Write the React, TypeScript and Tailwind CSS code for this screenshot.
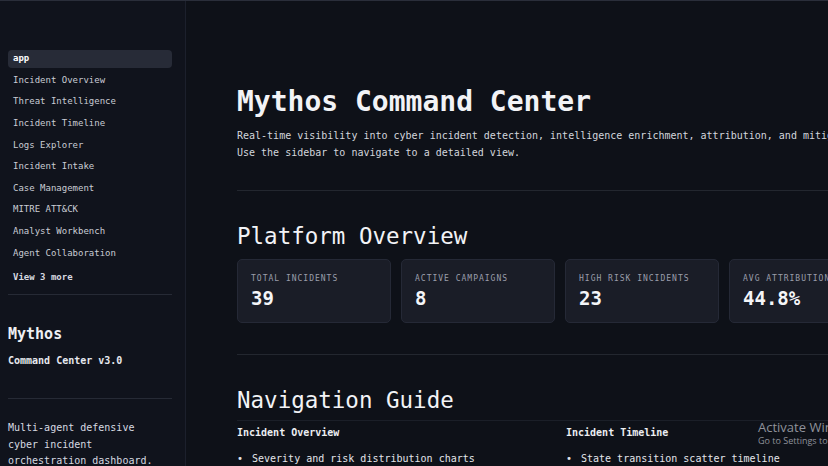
import React from "react";

const mono = { fontFamily: '"DejaVu Sans Mono", "Liberation Mono", monospace' };

const navItems = [
  "Incident Overview",
  "Threat Intelligence",
  "Incident Timeline",
  "Logs Explorer",
  "Incident Intake",
  "Case Management",
  "MITRE ATT&CK",
  "Analyst Workbench",
  "Agent Collaboration",
];

const stats = [
  { label: "TOTAL INCIDENTS", value: "39" },
  { label: "ACTIVE CAMPAIGNS", value: "8" },
  { label: "HIGH RISK INCIDENTS", value: "23" },
  { label: "AVG ATTRIBUTION", value: "44.8%" },
];

export default function App() {
  return (
    <div
      className="relative flex h-[466px] w-[828px] overflow-hidden border-t border-[#2a2e3a] bg-[#0e1118] text-[#e6e8ee]"
      style={mono}
    >
      {/* Sidebar */}
      <aside className="flex w-[186px] shrink-0 flex-col border-r border-[#1c202c] bg-[#10131c] pl-2 pr-[13px] pt-[49px]">
        <div className="flex flex-col">
          <div className="flex h-[18px] items-center rounded-[4px] bg-[#272b37] px-[5px] text-[9px] font-bold text-white">
            app
          </div>
          {navItems.map((n) => (
            <div key={n} className="mt-[3.6px] flex h-[18px] items-center px-[5px] text-[9px] text-[#c9ccd4]">
              {n}
            </div>
          ))}
          <div className="mt-[6px] flex h-[18px] items-center px-[5px] text-[9px] font-bold text-[#d7d9e0]">
            View 3 more
          </div>
        </div>
        <div className="mt-[8px] border-t border-[#262a35]" />
        <div className="mt-[29px] text-[15px] font-bold leading-[20px] text-[#eef0f4]">Mythos</div>
        <div className="mt-[10px] text-[10px] font-bold leading-[14px] text-[#e6e8ee]">Command Center v3.0</div>
        <div className="mt-[30px] border-t border-[#262a35]" />
        <div className="mt-[21px] whitespace-nowrap text-[10px] leading-[16.5px] text-[#d7dae1]">
          Multi-agent defensive
          <br />
          cyber incident
          <br />
          orchestration dashboard.
        </div>
      </aside>

      {/* Main */}
      <main className="w-[648px] shrink-0 pl-[51px] pt-[84px]">
        <h1 className="text-[28px] font-bold leading-[34px] text-[#f2f3f6] whitespace-nowrap">
          Mythos Command Center
        </h1>
        <p className="mt-[8px] whitespace-nowrap text-[10px] leading-[17px] text-[#d3d6dd]">
          Real-time visibility into cyber incident detection, intelligence enrichment, attribution, and mitigation.
          <br />
          Use the sidebar to navigate to a detailed view.
        </p>
        <div className="mt-[29px] w-[700px] border-t border-[#23272f]" />

        <h2 className="mt-[31px] whitespace-nowrap text-[22.5px] font-medium leading-[28px] text-[#f2f3f6]">
          Platform Overview
        </h2>
        <div className="mt-[9px] flex w-[700px] gap-[10px]">
          {stats.map((s) => (
            <div
              key={s.label}
              className="h-[64px] w-[154px] shrink-0 rounded-[5px] border border-[#252936] bg-[#1a1d27] px-[13px] pt-[14px]"
            >
              <div className="whitespace-nowrap text-[8px] leading-[10px] tracking-[1px] text-[#9a9eab]">{s.label}</div>
              <div className="mt-[2px] whitespace-nowrap text-[19px] font-bold leading-[24px] text-[#f4f5f8]">
                {s.value}
              </div>
            </div>
          ))}
        </div>
        <div className="mt-[31px] w-[700px] border-t border-[#23272f]" />

        <h2 className="mt-[31px] whitespace-nowrap text-[22.5px] font-medium leading-[28px] text-[#f2f3f6]">
          Navigation Guide
        </h2>
        <div className="mt-[6px] w-[700px] border-t border-[#1b1f28]" />
        <div className="mt-[5px] grid w-[648px] grid-cols-2 gap-[10px]">
          <div>
            <div className="text-[10px] font-bold leading-[14px] text-[#eceef2]">Incident Overview</div>
            <div className="mt-[12px] flex items-center whitespace-nowrap text-[10px] leading-[14px] text-[#e3e5ea]">
              <span className="w-[15px]">•</span>Severity and risk distribution charts
            </div>
          </div>
          <div>
            <div className="text-[10px] font-bold leading-[14px] text-[#eceef2]">Incident Timeline</div>
            <div className="mt-[12px] flex items-center whitespace-nowrap text-[10px] leading-[14px] text-[#e3e5ea]">
              <span className="w-[15px]">•</span>State transition scatter timeline
            </div>
          </div>
        </div>
      </main>

      {/* Windows activation watermark */}
      <div
        className="pointer-events-none absolute left-[758px] top-[418px] whitespace-nowrap text-[#8e929b]"
        style={{ fontFamily: '"Open Sans", "Liberation Sans", sans-serif' }}
      >
        <div className="text-[13px] leading-[16px]">Activate Windows</div>
        <div className="text-[9px] leading-[12px]">Go to Settings to activate Windows.</div>
      </div>
    </div>
  );
}
